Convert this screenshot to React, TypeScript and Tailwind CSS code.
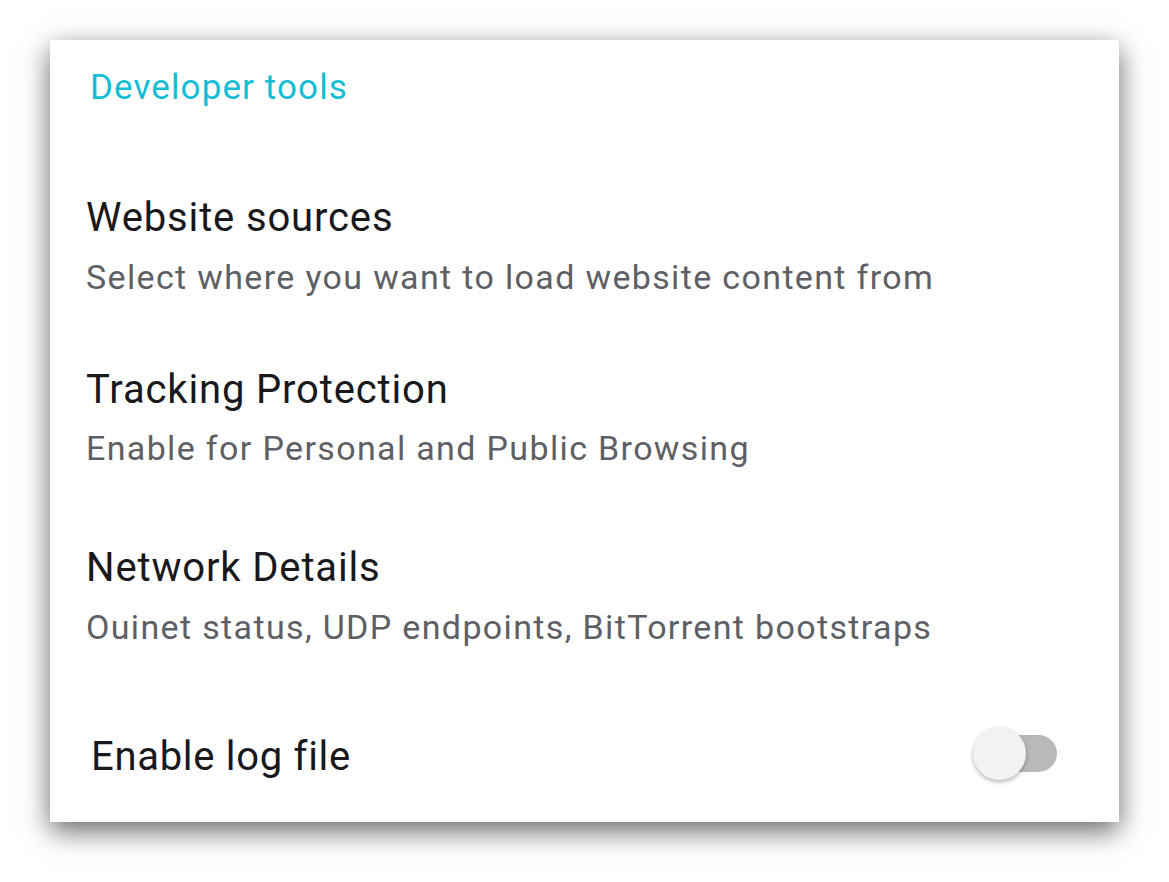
export default function App() {
  const items = [
    {
      title: "Website sources",
      sub: "Select where you want to load website content from",
      mt: "mt-[86px]",
      subMt: "mt-[15px]",
    },
    {
      title: "Tracking Protection",
      sub: "Enable for Personal and Public Browsing",
      mt: "mt-[69px]",
      subMt: "mt-[14px]",
    },
    {
      title: "Network Details",
      sub: "Ouinet status, UDP endpoints, BitTorrent bootstraps",
      mt: "mt-[76px]",
      subMt: "mt-[15px]",
    },
  ];

  return (
    <div
      className="w-[1169px] h-[882px] bg-white pt-[40px] pl-[50px]"
      style={{ fontFamily: "Roboto, 'Noto Sans', sans-serif" }}
    >
      <div className="w-[1069px] h-[782px] bg-white shadow-[0_9px_26px_rgba(0,0,0,0.6)] pt-[28px] pl-[36px] pr-[62px] flex flex-col">
        {/* Section header */}
        <div className="text-[35px] leading-[40px] tracking-[1.1px] text-[#14bdd6] pl-[4px]">
          Developer tools
        </div>

        {items.map((item) => (
          <div key={item.title} className={`${item.mt} flex flex-col`}>
            <div className="text-[40px] leading-[48px] tracking-[0.85px] text-[#18181d]">
              {item.title}
            </div>
            <div
              className={`${item.subMt} text-[34px] leading-[40px] tracking-[1.35px] text-[#5e5f64]`}
            >
              {item.sub}
            </div>
          </div>
        ))}

        {/* Log file toggle */}
        <div className="mt-[86px] flex items-start justify-between pl-[5px]">
          <div className="text-[40px] leading-[48px] tracking-[0.7px] text-[#18181d]">
            Enable log file
          </div>
          <div className="relative w-[84px] h-[53px] -mt-[6px] flex items-center justify-end">
            <div className="w-[72px] h-[37px] rounded-full bg-[#b9b9bb]" />
            <div className="absolute left-0 top-0 w-[53px] h-[53px] rounded-full bg-[#f2f2f2] shadow-[0_2px_4px_rgba(0,0,0,0.3)]" />
          </div>
        </div>
      </div>
    </div>
  );
}
